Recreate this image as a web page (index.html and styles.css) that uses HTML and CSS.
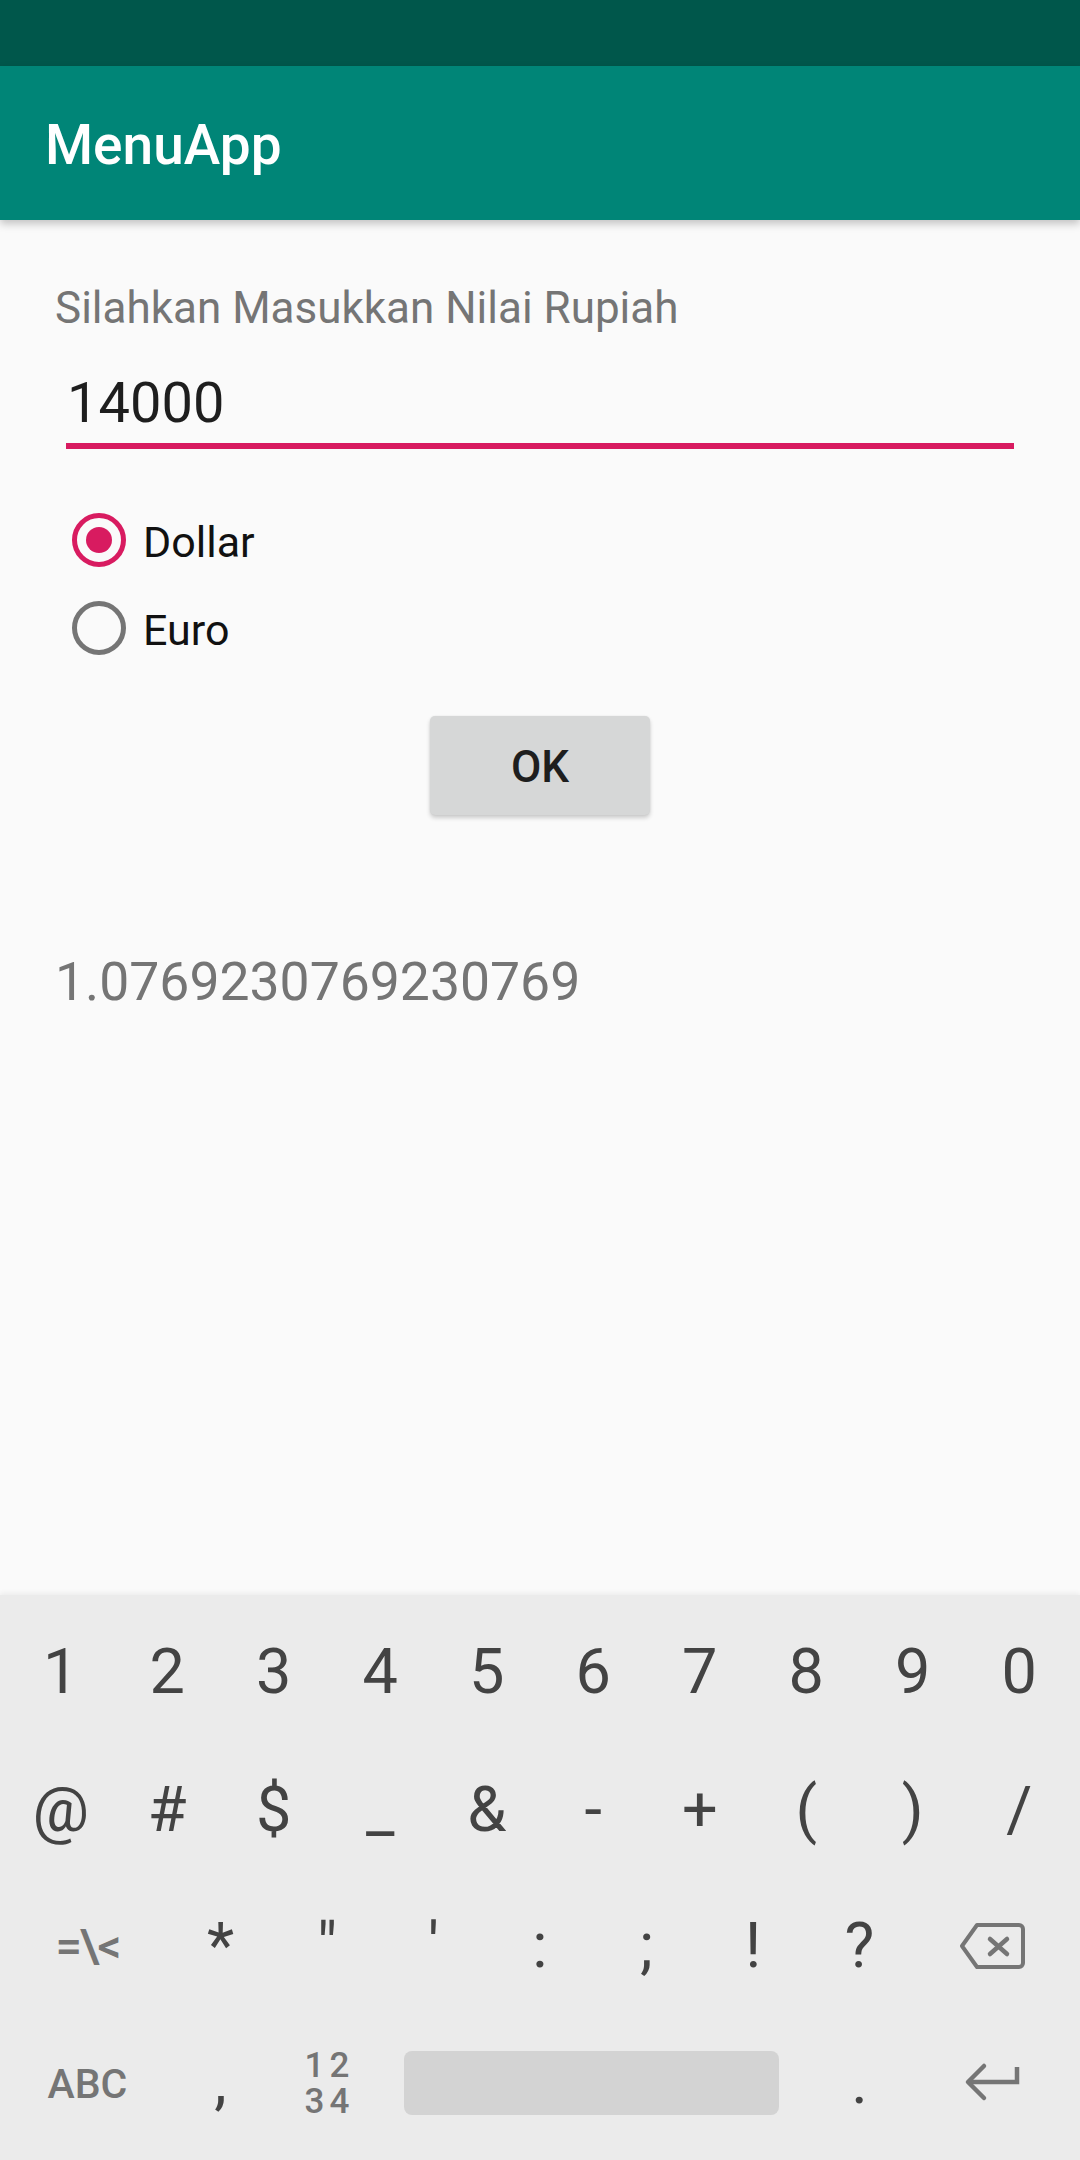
FILE: index.html
```html
<!DOCTYPE html>
<html lang="id">
<head>
<meta charset="utf-8">
<title>MenuApp</title>
<link rel="stylesheet" href="styles.css">
</head>
<body>
<div class="screen">
  <div class="status-bar"></div>
  <header class="app-bar"><span class="app-title">MenuApp</span></header>
  <main class="content">
    <div class="label">Silahkan Masukkan Nilai Rupiah</div>
    <div class="edit"><span class="edit-text">14000</span></div>
    <div class="radio-group">
      <div class="radio-row"><span class="radio checked"><span class="dot"></span></span><span class="radio-text">Dollar</span></div>
      <div class="radio-row"><span class="radio"></span><span class="radio-text">Euro</span></div>
    </div>
    <div class="btn-wrap"><div class="btn">OK</div></div>
    <div class="result">1.0769230769230769</div>
  </main>
  <section class="keyboard">
    <div class="row row-10 row-a">
      <span class="key">1</span><span class="key">2</span><span class="key">3</span><span class="key">4</span><span class="key">5</span><span class="key">6</span><span class="key">7</span><span class="key">8</span><span class="key">9</span><span class="key">0</span>
    </div>
    <div class="row row-10 row-b">
      <span class="key">@</span><span class="key">#</span><span class="key">$</span><span class="key">_</span><span class="key">&amp;</span><span class="key">-</span><span class="key">+</span><span class="key">(</span><span class="key">)</span><span class="key">/</span>
    </div>
    <div class="row row-3">
      <span class="key key-func key-sym">=\&lt;</span><span class="key">*</span><span class="key">"</span><span class="key">'</span><span class="key">:</span><span class="key">;</span><span class="key">!</span><span class="key">?</span>
      <span class="key key-icon"><svg width="70" height="50" viewBox="0 0 70 50"><path d="M19 4 H61 a4 4 0 0 1 4 4 V42 a4 4 0 0 1 -4 4 H19 L4 25 Z" fill="none" stroke="#757575" stroke-width="4" stroke-linejoin="round"/><path d="M32 18 L49 33 M49 18 L32 33" stroke="#757575" stroke-width="4.5" stroke-linecap="round"/></svg></span>
    </div>
    <div class="row row-4">
      <span class="key key-func">ABC</span><span class="key">,</span><span class="key key-num">12<br>34</span>
      <span class="key key-space"><span class="space-bar"></span></span>
      <span class="key">.</span>
      <span class="key key-icon"><svg width="60" height="42" viewBox="0 0 60 42"><path d="M54 6 V21 H6" fill="none" stroke="#757575" stroke-width="4.5"/><path d="M21 5 L5 21 L21 37" fill="none" stroke="#757575" stroke-width="4.5" stroke-linecap="round" stroke-linejoin="round"/></svg></span>
    </div>
  </section>
</div>
</body>
</html>
```

FILE: styles.css
```css
* { box-sizing: border-box; }
html, body { margin: 0; padding: 0; }
body {
  background: #FAFAFA;
  font-family: Roboto, "Noto Sans", sans-serif;
}
.screen {
  width: 1080px;
  height: 2160px;
  display: flex;
  flex-direction: column;
  overflow: hidden;
  background: #FAFAFA;
}
.status-bar {
  height: 66px;
  background: #00574B;
  flex: none;
}
.app-bar {
  height: 154px;
  background: #008577;
  flex: none;
  display: flex;
  align-items: center;
  padding-left: 45px;
  box-shadow: 0 4px 8px rgba(0,0,0,0.22);
  position: relative;
  z-index: 2;
}
.app-title {
  color: #FFFFFF;
  font-size: 55px;
  font-weight: 500;
  line-height: 1;
  margin-top: 4px;
}
.content {
  flex: 1;
  padding-top: 58px;
  display: flex;
  flex-direction: column;
}
.label {
  margin-left: 55px;
  font-size: 44px;
  line-height: 56px;
  padding-top: 2px;
  color: #757575;
}
.edit {
  margin-top: 34px;
  margin-left: 66px;
  width: 948px;
  padding-bottom: 7px;
  border-bottom: 6px solid #D81B60;
}
.edit-text {
  display: block;
  padding-left: 1px;
  font-size: 56px;
  line-height: 66px;
  color: #1E1E1E;
}
.radio-group {
  margin-top: 47px;
  display: flex;
  flex-direction: column;
}
.radio-row {
  height: 88px;
  display: flex;
  align-items: center;
  padding-left: 72px;
}
.radio {
  width: 54px;
  height: 54px;
  border-radius: 50%;
  border: 5px solid #757575;
  display: flex;
  align-items: center;
  justify-content: center;
  flex: none;
}
.radio.checked { border-color: #D81B60; }
.dot {
  width: 26px;
  height: 26px;
  border-radius: 50%;
  background: #D81B60;
}
.radio-text {
  margin-left: 17px;
  font-size: 43px;
  line-height: 88px;
  padding-top: 3px;
  color: #111111;
}
.btn-wrap {
  margin-top: 44px;
  display: flex;
  justify-content: center;
}
.btn {
  width: 220px;
  height: 99px;
  border-radius: 5px;
  background: #D6D7D7;
  box-shadow: 0 3px 4px rgba(0,0,0,0.18), 0 0 2px rgba(0,0,0,0.08);
  display: flex;
  align-items: center;
  justify-content: center;
  font-size: 44px;
  font-weight: 500;
  color: #1E1E1E;
  padding-top: 2px;
}
.result {
  margin-top: 136px;
  margin-left: 55px;
  font-size: 53.5px;
  line-height: 62px;
  color: #757575;
}
.keyboard {
  flex: none;
  height: 565px;
  background: #EBEBEB;
  padding: 7px 7.5px 0;
  box-shadow: 0 -2px 5px rgba(0,0,0,0.06);
}
.row {
  height: 137px;
  display: grid;
}
.row-a { height: 139px; }
.row-b { height: 137px; }
.row-3 { height: 135px; }
.row-4 { height: 137px; }
.row-10 { grid-template-columns: repeat(10, 1fr); }
.row-3 { grid-template-columns: 1.5fr repeat(7, 1fr) 1.5fr; }
.row-4 { grid-template-columns: 1.5fr 1fr 1fr 4fr 1fr 1.5fr; }
.key {
  display: flex;
  align-items: center;
  justify-content: center;
  font-size: 63px;
  line-height: 1;
  color: #434343;
}
.key-func {
  font-size: 41px;
  font-weight: 500;
  color: #757575;
  padding-top: 6px;
}
.key-sym {
  font-size: 47px;
  letter-spacing: -2px;
  padding-top: 0;
}
.key-num {
  font-size: 35px;
  line-height: 36px;
  font-weight: 500;
  color: #757575;
  letter-spacing: 5px;
  padding-left: 5px;
  padding-top: 4px;
  text-align: center;
}
.key-space {
  justify-content: flex-start;
  padding-left: 24px;
}
.space-bar {
  width: 375px;
  height: 64px;
  border-radius: 8px;
  background: #D3D3D3;
  margin-top: 3px;
}
```
